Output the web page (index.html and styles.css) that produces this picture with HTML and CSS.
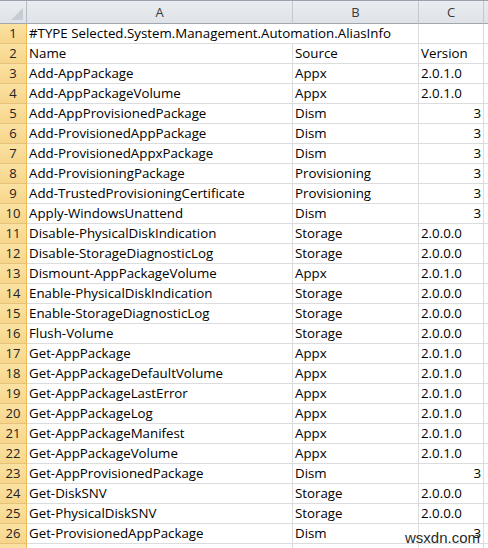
FILE: index.html
```html
<!DOCTYPE html>
<html>
<head>
<meta charset="utf-8">
<link rel="stylesheet" href="styles.css">
</head>
<body>
<div class="sheet">
  <div class="hdr corner"><span class="tri"></span></div>
  <div class="hdr col">A</div>
  <div class="hdr col">B</div>
  <div class="hdr col">C</div>
  <div class="hdr col last"></div>

  <div class="rn">1</div><div class="c overflow">#TYPE Selected.System.Management.Automation.AliasInfo</div><div class="c"></div><div class="c"></div><div class="c"></div>
  <div class="rn">2</div><div class="c">Name</div><div class="c">Source</div><div class="c">Version</div><div class="c"></div>
  <div class="rn">3</div><div class="c">Add-AppPackage</div><div class="c">Appx</div><div class="c">2.0.1.0</div><div class="c"></div>
  <div class="rn">4</div><div class="c">Add-AppPackageVolume</div><div class="c">Appx</div><div class="c">2.0.1.0</div><div class="c"></div>
  <div class="rn">5</div><div class="c">Add-AppProvisionedPackage</div><div class="c">Dism</div><div class="c num">3</div><div class="c"></div>
  <div class="rn">6</div><div class="c">Add-ProvisionedAppPackage</div><div class="c">Dism</div><div class="c num">3</div><div class="c"></div>
  <div class="rn">7</div><div class="c">Add-ProvisionedAppxPackage</div><div class="c">Dism</div><div class="c num">3</div><div class="c"></div>
  <div class="rn">8</div><div class="c">Add-ProvisioningPackage</div><div class="c">Provisioning</div><div class="c num">3</div><div class="c"></div>
  <div class="rn">9</div><div class="c">Add-TrustedProvisioningCertificate</div><div class="c">Provisioning</div><div class="c num">3</div><div class="c"></div>
  <div class="rn">10</div><div class="c">Apply-WindowsUnattend</div><div class="c">Dism</div><div class="c num">3</div><div class="c"></div>
  <div class="rn">11</div><div class="c">Disable-PhysicalDiskIndication</div><div class="c">Storage</div><div class="c">2.0.0.0</div><div class="c"></div>
  <div class="rn">12</div><div class="c">Disable-StorageDiagnosticLog</div><div class="c">Storage</div><div class="c">2.0.0.0</div><div class="c"></div>
  <div class="rn">13</div><div class="c">Dismount-AppPackageVolume</div><div class="c">Appx</div><div class="c">2.0.1.0</div><div class="c"></div>
  <div class="rn">14</div><div class="c">Enable-PhysicalDiskIndication</div><div class="c">Storage</div><div class="c">2.0.0.0</div><div class="c"></div>
  <div class="rn">15</div><div class="c">Enable-StorageDiagnosticLog</div><div class="c">Storage</div><div class="c">2.0.0.0</div><div class="c"></div>
  <div class="rn">16</div><div class="c">Flush-Volume</div><div class="c">Storage</div><div class="c">2.0.0.0</div><div class="c"></div>
  <div class="rn">17</div><div class="c">Get-AppPackage</div><div class="c">Appx</div><div class="c">2.0.1.0</div><div class="c"></div>
  <div class="rn">18</div><div class="c">Get-AppPackageDefaultVolume</div><div class="c">Appx</div><div class="c">2.0.1.0</div><div class="c"></div>
  <div class="rn">19</div><div class="c">Get-AppPackageLastError</div><div class="c">Appx</div><div class="c">2.0.1.0</div><div class="c"></div>
  <div class="rn">20</div><div class="c">Get-AppPackageLog</div><div class="c">Appx</div><div class="c">2.0.1.0</div><div class="c"></div>
  <div class="rn">21</div><div class="c">Get-AppPackageManifest</div><div class="c">Appx</div><div class="c">2.0.1.0</div><div class="c"></div>
  <div class="rn">22</div><div class="c">Get-AppPackageVolume</div><div class="c">Appx</div><div class="c">2.0.1.0</div><div class="c"></div>
  <div class="rn">23</div><div class="c">Get-AppProvisionedPackage</div><div class="c">Dism</div><div class="c num">3</div><div class="c"></div>
  <div class="rn">24</div><div class="c">Get-DiskSNV</div><div class="c">Storage</div><div class="c">2.0.0.0</div><div class="c"></div>
  <div class="rn">25</div><div class="c">Get-PhysicalDiskSNV</div><div class="c">Storage</div><div class="c">2.0.0.0</div><div class="c"></div>
  <div class="rn">26</div><div class="c">Get-ProvisionedAppPackage</div><div class="c">Dism</div><div class="c num">3</div><div class="c"></div>
  <div class="rn"></div><div class="c"></div><div class="c"></div><div class="c"></div><div class="c"></div>
</div>
<div class="watermark">wsxdn.com</div>
</body>
</html>
```
FILE: styles.css
```css
html, body {
  margin: 0;
  padding: 0;
  background: #ffffff;
  overflow: hidden;
}
body {
  width: 488px;
  height: 548px;
  position: relative;
  font-family: "Open Sans", "Liberation Sans", sans-serif;
  font-size: 13.3px;
  color: #000;
}
.sheet {
  display: grid;
  grid-template-columns: 27px 266px 126px 65px 1fr;
  grid-template-rows: 23px repeat(27, 20px);
  border-top: 1px solid #9aa3ad;
}
.hdr {
  box-sizing: border-box;
  background: linear-gradient(#e9edf1, #dfe3e8);
  border-right: 1px solid #c5c9ce;
  border-bottom: 1px solid #9ea6ae;
  display: flex;
  align-items: center;
  justify-content: center;
  color: #3a3a3a;
  font-size: 13px;
}
.corner {
  position: relative;
  border-right: 1px solid #b5bcc4;
}
.tri {
  position: absolute;
  right: 3px;
  bottom: 3px;
  width: 0;
  height: 0;
  border-left: 12px solid transparent;
  border-bottom: 12px solid #c6ccd3;
}
.rn {
  box-sizing: border-box;
  background: linear-gradient(#fbe2a3, #f7d58a);
  border-right: 1px solid #f0b94b;
  border-bottom: 1px solid #e5c27c;
  display: flex;
  align-items: flex-end;
  justify-content: center;
  padding-bottom: 1px;
  color: #222;
  font-size: 13px;
  line-height: 18px;
}
.c {
  box-sizing: border-box;
  border-right: 1px solid #dadcdd;
  border-bottom: 1px solid #dadcdd;
  padding: 0 2px 1px 2px;
  white-space: nowrap;
  line-height: 18px;
  display: flex;
  align-items: flex-end;
  min-width: 0;
}
.overflow {
  overflow: visible;
  border-right-color: transparent;
  position: relative;
  z-index: 1;
}
.num {
  justify-content: flex-end;
}
.watermark {
  position: absolute;
  right: 8px;
  bottom: 2px;
  font-family: "Liberation Sans", sans-serif;
  font-size: 15px;
  color: #2a2a2a;
  z-index: 2;
}
```
